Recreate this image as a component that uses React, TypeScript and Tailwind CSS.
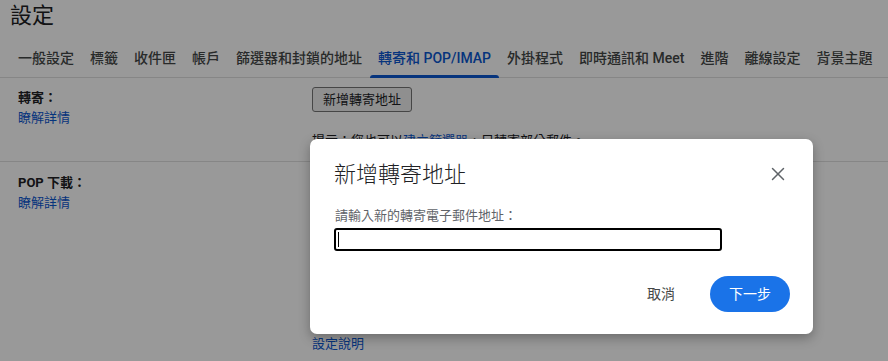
import { X } from "lucide-react";

const tabs = [
  "一般設定",
  "標籤",
  "收件匣",
  "帳戶",
  "篩選器和封鎖的地址",
  "轉寄和 POP/IMAP",
  "外掛程式",
  "即時通訊和 Meet",
  "進階",
  "離線設定",
  "背景主題",
];

const font = "font-['Roboto','Noto_Sans_CJK_TC',sans-serif]";

const App = () => {
  return (
    <div className={`relative h-[361px] w-[888px] overflow-hidden bg-white text-[#202124] ${font}`}>
      {/* page */}
      <div className="h-[40px] pl-[10px] pt-[1px] text-[22px] leading-[30px]">設定</div>
      <div className="flex h-[38px] border-b border-[#e0e0e0] px-[10px]">
        {tabs.map((t) => {
          const active = t === "轉寄和 POP/IMAP";
          return (
            <div
              key={t}
              className={`relative flex h-full items-center px-[8px] text-[14px] font-medium whitespace-nowrap ${
                active ? "text-[#0b57d0]" : "text-[#444746]"
              }`}
            >
              {t}
              {active && <div className="absolute right-0 bottom-[-1px] left-0 h-[3px] rounded-t-[3px] bg-[#0b57d0]" />}
            </div>
          );
        })}
      </div>

      <div className="flex h-[84px] border-b border-[#e0e0e0] text-[13px]">
        <div className="w-[312px] pt-[10px] pl-[18px]">
          <div className="leading-[20px] font-bold">轉寄：</div>
          <div className="leading-[19px] text-[#0b57d0]">瞭解詳情</div>
        </div>
        <div className="pt-[9px]">
          <div className="flex h-[25px] w-[100px] items-center justify-center rounded-[3px] border border-[#767676] bg-[#efefef] text-[13px]">
            新增轉寄地址
          </div>
          <div className="mt-[19px] leading-[20px]">
            提示：您也可以<span className="text-[#0b57d0]">建立篩選器</span>，只轉寄部分郵件。
          </div>
        </div>
      </div>

      <div className="flex text-[13px]">
        <div className="w-[312px] pt-[11px] pl-[18px]">
          <div className="leading-[20px] font-bold">POP 下載：</div>
          <div className="leading-[19px] text-[#0b57d0]">瞭解詳情</div>
        </div>
        <div className="pt-[172px]">
          <div className="leading-[20px] text-[#0b57d0]">設定說明</div>
        </div>
      </div>

      {/* scrim */}
      <div className="absolute inset-0 bg-black/40" />

      {/* dialog */}
      <div className="absolute top-[139px] left-[310px] flex h-[195px] w-[503px] flex-col rounded-[7px] bg-white pr-[23px] pl-[24px] shadow-[0_4px_12px_rgba(0,0,0,0.3)]">
        <div className="flex h-[68px] items-center justify-between pt-[2px]">
          <div className="text-[22px] font-light text-[#202124]">新增轉寄地址</div>
          <X className="mr-[1px] h-[22px] w-[22px] text-[#5f6368]" strokeWidth={1.6} />
        </div>
        <div className="pl-[1px] text-[13px] leading-[18px] text-[#5f6368]">請輸入新的轉寄電子郵件地址：</div>
        <div className="mt-[3px] flex h-[23px] w-[388px] items-center rounded-[3px] border-2 border-black pl-[2px]">
          <div className="h-[15px] w-[1px] bg-black" />
        </div>
        <div className="mt-[25px] flex items-center justify-end gap-[35px]">
          <div className="text-[14px] text-[#444746]">取消</div>
          <div className="flex h-[36px] w-[80px] items-center justify-center rounded-full bg-[#1a73e8] text-[14px] text-white">
            下一步
          </div>
        </div>
      </div>
    </div>
  );
};

export default App;
